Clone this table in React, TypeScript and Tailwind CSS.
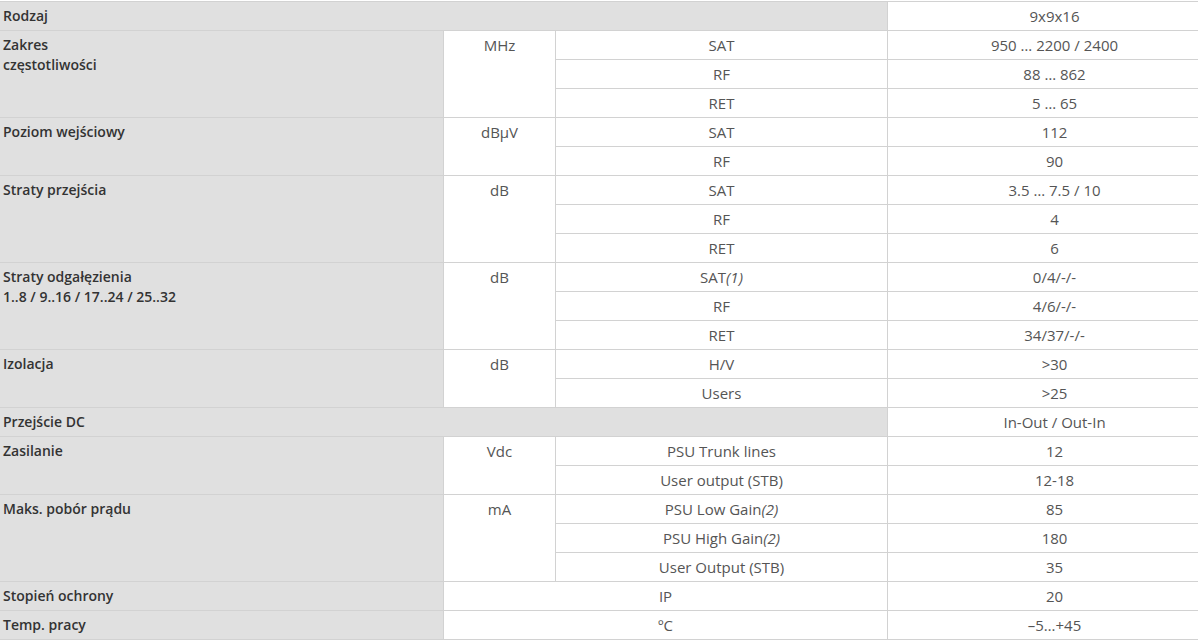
const label = 'bg-[#e0e0e0] border-b border-[#d2d2d2] pl-[3px] pr-2 pt-[4px] pb-[4px] align-top text-left text-[14px] font-semibold text-[#333]'
const cell = 'border-b border-l border-[#d2d2d2] px-2 pt-[4px] pb-[4px] text-center text-[15px] text-[#555] bg-white'
const val = 'border-b border-l border-[#d2d2d2] pl-[31px] pr-2 pt-[4px] pb-[4px] text-center text-[15px] text-[#555] bg-white'
const unit = cell + ' align-top'

type Group = {
  label: React.ReactNode
  unit: string
  rows: [React.ReactNode, string][]
}

const groups1: Group[] = [
  {
    label: (<>Zakres<br />częstotliwości</>),
    unit: 'MHz',
    rows: [['SAT', '950 … 2200 / 2400'], ['RF', '88 … 862'], ['RET', '5 … 65']],
  },
  { label: 'Poziom wejściowy', unit: 'dBµV', rows: [['SAT', '112'], ['RF', '90']] },
  { label: 'Straty przejścia', unit: 'dB', rows: [['SAT', '3.5 … 7.5 / 10'], ['RF', '4'], ['RET', '6']] },
  {
    label: (<>Straty odgałęzienia<br />1..8 / 9..16 / 17..24 / 25..32</>),
    unit: 'dB',
    rows: [[<>SAT<i>(1)</i></>, '0/4/-/-'], ['RF', '4/6/-/-'], ['RET', '34/37/-/-']],
  },
  { label: 'Izolacja', unit: 'dB', rows: [['H/V', '>30'], ['Users', '>25']] },
]

const groups2: Group[] = [
  { label: 'Zasilanie', unit: 'Vdc', rows: [['PSU Trunk lines', '12'], ['User output (STB)', '12-18']] },
  {
    label: 'Maks. pobór prądu',
    unit: 'mA',
    rows: [
      [<>PSU Low Gain<i>(2)</i></>, '85'],
      [<>PSU High Gain<i>(2)</i></>, '180'],
      ['User Output (STB)', '35'],
    ],
  },
]

function GroupRows({ g }: { g: Group }) {
  return (
    <>
      {g.rows.map(([p, v], i) => (
        <tr key={i} className="h-[29px]">
          {i === 0 && (
            <>
              <td rowSpan={g.rows.length} className={label}>{g.label}</td>
              <td rowSpan={g.rows.length} className={unit}>{g.unit}</td>
            </>
          )}
          <td className={cell}>{p}</td>
          <td className={val}>{v}</td>
        </tr>
      ))}
    </>
  )
}

export default function App() {
  return (
    <div className="w-[1198px] bg-white pt-px" style={{ fontFamily: '"Open Sans", "DejaVu Sans", sans-serif' }}>
      <table className="w-[1198px] table-fixed border-separate border-spacing-0 border-t border-[#d2d2d2] leading-[20px]">
        <colgroup>
          <col className="w-[443px]" />
          <col className="w-[112px]" />
          <col className="w-[332px]" />
          <col className="w-[311px]" />
        </colgroup>
        <tbody>
          <tr className="h-[29px]">
            <td colSpan={3} className={label}>Rodzaj</td>
            <td className={val}>9x9x16</td>
          </tr>
          {groups1.map((g, i) => <GroupRows key={i} g={g} />)}
          <tr className="h-[29px]">
            <td colSpan={3} className={label}>Przejście DC</td>
            <td className={val}>In-Out / Out-In</td>
          </tr>
          {groups2.map((g, i) => <GroupRows key={i} g={g} />)}
          <tr className="h-[29px]">
            <td className={label}>Stopień ochrony</td>
            <td colSpan={2} className={cell}>IP</td>
            <td className={val}>20</td>
          </tr>
          <tr className="h-[29px]">
            <td className={label}>Temp. pracy</td>
            <td colSpan={2} className={cell}>ºC</td>
            <td className={val}>–5…+45</td>
          </tr>
        </tbody>
      </table>
    </div>
  )
}
